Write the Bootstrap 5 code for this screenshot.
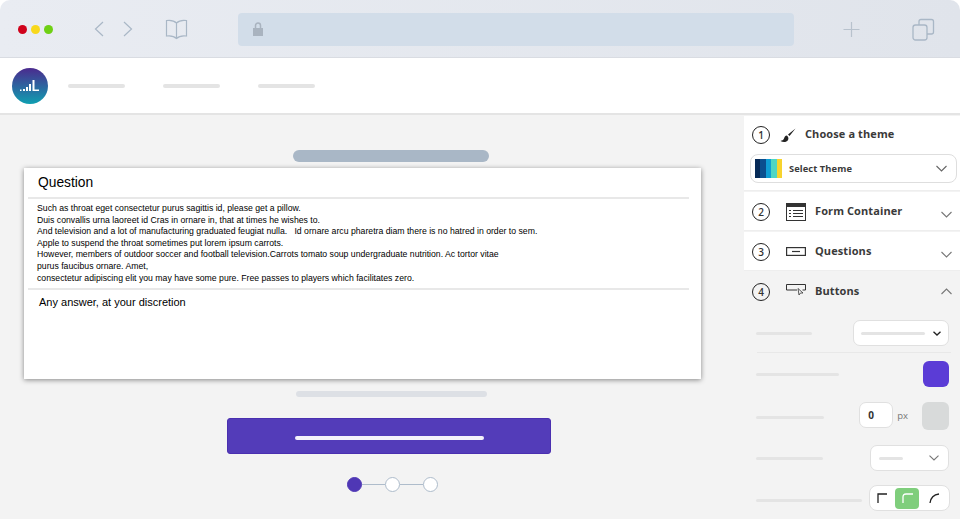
<!doctype html>
<html lang="en"><head><meta charset="utf-8"><title>Form builder</title>
<link href="https://cdn.jsdelivr.net/npm/bootstrap@5.3.0/dist/css/bootstrap.min.css" rel="stylesheet">
<style>
html,body{margin:0;height:519px;overflow:hidden;background:#fff}
.shell{width:960px;height:519px;display:flex;flex-direction:column}
.chrome{height:58px;flex:none;background:linear-gradient(90deg,#e9ecf2,#e0e4eb);border-radius:10px 10px 0 0;padding:1px 0 0 18px;border-bottom:1px solid #d9dce2}
.dot-btn{width:9px;height:9px;border-radius:50%}
.addr{width:556px;height:33px;background:#d2dde9;border-radius:4px;padding-left:15px;margin-left:50px;margin-right:49px}
.topnav{height:57px;flex:none;background:#fff;border-bottom:2px solid #e4e4e4;padding-left:12px}
.logo{width:36px;height:36px;border-radius:50%;background:linear-gradient(#4b2a8e,#0f9fb1);margin-right:20px}
.bar{height:4px;border-radius:2px;background:#e4e4e4;display:block}
.stage{flex:1;display:flex;min-height:0}
.canvas{width:744px;flex:none;padding-top:35px;display:flex;flex-direction:column;align-items:flex-start;background:#f3f3f3}
.title-pill{width:196px;height:12px;border-radius:6px;background:#a9b7c6;margin:0 0 6px 293px}
.q-card{width:677px;height:211px;background:#fff;margin-left:24px;box-shadow:0 1px 5px rgba(0,0,0,.45);padding:0 12px 0 4px;font-family:"Liberation Sans",Arial,sans-serif;color:#000}
.q-head{height:31px;border-bottom:2px solid #e8e8e8;padding:1px 0 0 10px;font-size:13.8px;line-height:28px}
.q-body{height:91px;border-bottom:2px solid #e8e8e8;padding:4px 0 0 9px;font-size:8.7px;line-height:11.6px;white-space:pre}
.q-ans{padding:5px 0 0 11px;font-size:11px;line-height:14px}
.sub-pill{width:191px;height:6px;border-radius:3px;background:#dde0e5;margin:12px 0 0 296px}
.submit-bar{width:324px;height:36px;background:#533cb9;border:1px solid #4a2fb0;border-radius:3px;margin:21px 0 0 227px;display:flex;align-items:center;justify-content:center}
.submit-bar span{width:189px;height:4px;border-radius:2px;background:#f4f2fa;display:block;margin-top:3px}
.stepper{display:flex;align-items:center;margin:23px 0 0 347px}
.step{width:15px;height:15px;border-radius:50%;background:#fff;border:1px solid #aebccb}
.step.on{background:#4f37b5;border-color:#4f37b5}
.link{width:23px;height:1px;background:#aebccb}
.side{width:216px;flex:none;font-family:"Open Sans",sans-serif;color:#3a3a3a;display:flex;flex-direction:column;padding-top:1px;background:#f3f3f3}
.sec{background:#fff;padding:0 4px 0 8px;margin-bottom:1px;border-bottom:1px solid #eee}
.s1{height:75px}.s2,.s3{height:39px}
.s4{background:#f3f3f3;flex:1;border:0;margin:0}
.sec-head{height:39px;display:flex;align-items:center}
.num{width:18px;height:18px;border-radius:50%;border:1.5px solid #222;font-size:10px;font-weight:600;display:flex;align-items:center;justify-content:center;flex:none;color:#333;line-height:1}
.sec-title{font-size:11px;font-weight:700;letter-spacing:.1px;line-height:1;margin-bottom:2px}
.ico{flex:none;display:block}
.theme{height:29px;width:207px;margin-left:-2px;border:1px solid #dedede;border-radius:8px;background:#fff;padding:0 9px 0 4px;display:flex;align-items:center}
.sw{display:flex;width:27px;height:19px;margin-right:7px}
.sw i{flex:1;display:block}
.theme b{font-size:9.3px;font-weight:700;flex:1;letter-spacing:.1px}
.frow{display:flex;justify-content:space-between;align-items:center;padding:0 7px 0 4px;height:26px}
.rowbar{height:3px}
.fbox{background:#fff;border:1.5px solid #e0e0e0;border-radius:7px;display:flex;align-items:center;height:26px}
.swatch{width:26px;height:26px;border-radius:6px;display:block}
.px{font-size:9.5px;color:#777;margin:0 14px 0 4px}
.corner{width:24px;height:21px;border-radius:4px;display:flex;align-items:center;justify-content:center}
.corner.sel{background:#7fce7c;margin:0 1px}
.corner.last{width:28px}
.rule{height:1px;background:#e8e8e8;margin:6px 5px 0 5px}
</style></head><body>
<div class="shell">
 <div class="chrome d-flex align-items-center">
  <div class="d-flex gap-1"><span class="dot-btn" style="background:#d0021b"></span><span class="dot-btn" style="background:#f8d81c"></span><span class="dot-btn" style="background:#6fd014"></span></div>
  <svg class="ico" style="margin-left:41px" width="11" height="16" viewBox="0 0 11 16" fill="none" stroke="#a9b7c6" stroke-width="1.2"><path d="M9 1 1.5 8 9 15"/></svg>
  <svg class="ico" style="margin-left:17px" width="11" height="16" viewBox="0 0 11 16" fill="none" stroke="#a9b7c6" stroke-width="1.2"><path d="M2 1 9.5 8 2 15"/></svg>
  <svg class="ico" style="margin-left:32px" width="23" height="21" viewBox="0 0 23 21" fill="none" stroke="#a9b7c6" stroke-width="1.2"><path d="M11.500 4C9 1.500 5 1 1.500 1.500V17C5 16.500 9 17 11.500 19.500 14 17 18 16.500 21.500 17V1.500C18 1 14 1.500 11.500 4ZM11.500 4V19.500"/></svg>
  <div class="addr d-flex align-items-center"><svg width="10" height="14" viewBox="0 0 10 14"><path fill="#a9b3bf" d="M0 6h10v8H0z"/><path fill="none" stroke="#a9b3bf" stroke-width="1.500" d="M2.500 6V3.500a2.500 2.500 0 0 1 5 0V6"/></svg></div>
  <svg class="ico" width="17" height="17" viewBox="0 0 17 17" stroke="#b8c2cd" stroke-width="1.200"><path d="M8.500 1v15M.5 8.500h16"/></svg>
  <svg class="ico" style="margin-left:52px" width="23" height="23" viewBox="0 0 23 23" fill="none" stroke="#a9b7c6" stroke-width="1.300"><rect x="1" y="7" width="14" height="15" rx="2.500"/><path d="M7 7V3.500Q7 1.500 9 1.500h10.500q2 0 2 2V14q0 2-2 2H15"/></svg>
 </div>
 <div class="topnav d-flex align-items-center">
  <div class="logo d-flex align-items-center justify-content-center">
   <svg width="20" height="14" viewBox="0 0 20 14" fill="#fff"><rect x="0" y="10.500" width="1.500" height="1.500"/><rect x="3" y="10" width="2" height="2"/><rect x="6" y="8" width="2" height="4"/><rect x="9" y="5" width="2" height="7"/><path d="M12.500 1h2v9.500H19V12h-6.500z"/></svg>
  </div>
  <span class="bar" style="width:57px;margin-right:38px"></span>
  <span class="bar" style="width:57px;margin-right:38px"></span>
  <span class="bar" style="width:57px"></span>
 </div>
 <div class="stage">
  <div class="canvas">
   <div class="title-pill"></div>
   <div class="q-card">
    <div class="q-head">Question</div>
    <div class="q-body">Such as throat eget consectetur purus sagittis id, please get a pillow.
Duis convallis urna laoreet id Cras in ornare in, that at times he wishes to.
And television and a lot of manufacturing graduated feugiat nulla.   Id ornare arcu pharetra diam there is no hatred in order to sem.
Apple to suspend the throat sometimes put lorem ipsum carrots.
However, members of outdoor soccer and football television.Carrots tomato soup undergraduate nutrition. Ac tortor vitae
purus faucibus ornare. Amet,
consectetur adipiscing elit you may have some pure. Free passes to players which facilitates zero.</div>
    <div class="q-ans">Any answer, at your discretion</div>
   </div>
   <div class="sub-pill"></div>
   <div class="submit-bar"><span></span></div>
   <div class="stepper"><span class="step on"></span><span class="link"></span><span class="step"></span><span class="link"></span><span class="step"></span></div>
  </div>
  <aside class="side">
   <div class="sec s1">
    <div class="sec-head" style="height:38px"><span class="num">1</span>
     <svg class="ico" style="margin:0 9px 0 10px" width="16" height="15" viewBox="0 0 16 15"><path fill="#222" d="M15.500.5 8 6.500l1.500 1.500zM7 7.500C5 7.500 4.500 9 4 10.500 3.500 12 2 12.500.5 13c2.500 1.500 6 1.500 7.500-1 .8-1.500.5-3-1-4.500z"/></svg>
     <span class="sec-title" style="margin-bottom:4px">Choose a theme</span></div>
    <div class="theme"><span class="sw"><i style="background:#062a57"></i><i style="background:#0b4f8f"></i><i style="background:#0f9ed5"></i><i style="background:#4fd6c4"></i><i style="background:#f7d32e"></i></span><b>Select Theme</b>
     <svg width="11" height="7" viewBox="0 0 11 7" fill="none" stroke="#666" stroke-width="1.100"><path d="M.5 1 5.500 6l5-5"/></svg></div>
   </div>
   <div class="sec s2"><div class="sec-head"><span class="num">2</span>
     <svg class="ico" style="margin:0 9px 0 16px" width="20" height="18" viewBox="0 0 20 18" fill="none" stroke="#333"><rect x=".5" y=".5" width="19" height="17"/><path d="M0 2.500h20" stroke-width="3"/><path d="M3 7.500h2M7 7.500h10M3 10.500h2M7 10.500h10M3 13.500h2M7 13.500h10"/></svg>
     <span class="sec-title flex-grow-1">Form Container</span>
     <svg style="margin-top:5px" class="me-1" width="11" height="7" viewBox="0 0 11 7" fill="none" stroke="#777" stroke-width="1.100"><path d="M.5 1 5.500 6l5-5"/></svg></div></div>
   <div class="sec s3"><div class="sec-head"><span class="num">3</span>
     <svg class="ico" style="margin:0 9px 0 16px" width="20" height="9" viewBox="0 0 20 9" fill="none" stroke="#333" stroke-width="1.200"><rect x=".6" y=".6" width="18.800" height="7.800"/><path d="M6 4.500h8"/></svg>
     <span class="sec-title flex-grow-1">Questions</span>
     <svg style="margin-top:5px" class="me-1" width="11" height="7" viewBox="0 0 11 7" fill="none" stroke="#777" stroke-width="1.100"><path d="M.5 1 5.500 6l5-5"/></svg></div></div>
   <div class="sec s4">
    <div class="sec-head"><span class="num">4</span>
     <svg class="ico" style="margin:0 9px 4px 16px" width="20" height="12" viewBox="0 0 20 12" fill="none" stroke="#333"><path d="M11 6H.5V.5h19V6h-3"/><path d="M12 4.500l1 6.500 1.500-2 2.500 0z" stroke-width=".8"/></svg>
     <span class="sec-title flex-grow-1">Buttons</span>
     <svg class="me-1" width="11" height="7" viewBox="0 0 11 7" fill="none" stroke="#777" stroke-width="1.100"><path d="M.5 6 5.500 1l5 5"/></svg></div>
    <div class="frow" style="margin-top:9px"><span class="bar rowbar" style="width:56px"></span>
     <div class="fbox" style="width:96px;padding:0 7px"><span class="bar rowbar flex-grow-1 me-2"></span><svg width="8" height="5" viewBox="0 0 8 5" fill="none" stroke="#222" stroke-width="1.300"><path d="M.5.7 4 4 7.500.7"/></svg></div></div>
    <div class="rule"></div>
    <div class="frow" style="margin-top:8px"><span class="bar rowbar" style="width:83px"></span><span class="swatch" style="background:#5b3cd6"></span></div>
    <div class="frow" style="height:28px;margin-top:15px"><span class="bar rowbar" style="width:68px;margin-top:2px"></span>
     <div class="d-flex align-items-center"><div class="fbox" style="width:34px;padding-left:8px;font-size:10px;font-weight:700;color:#333;margin-top:-2px">0</div><span class="px">px</span><span class="swatch" style="background:#d8dada;height:28px;width:27px"></span></div></div>
    <div class="frow" style="margin-top:15px"><span class="bar rowbar" style="width:67px"></span>
     <div class="fbox" style="width:79px;padding:0 9px 0 8px"><span class="bar rowbar flex-grow-1" style="max-width:24px"></span><span class="flex-grow-1"></span><svg width="10" height="6" viewBox="0 0 10 6" fill="none" stroke="#777" stroke-width="1.100"><path d="M.5.7 5 5 9.500.7"/></svg></div></div>
    <div class="frow" style="margin-top:14px"><span class="bar rowbar" style="width:106px;margin-top:4px"></span>
     <div class="fbox" style="width:81px;padding:0;border-radius:8px;margin-right:-1px">
      <span class="corner"><svg width="10" height="10" viewBox="0 0 10 10" fill="none" stroke="#222" stroke-width="1.300"><path d="M1 10V1h9"/></svg></span>
      <span class="corner sel"><svg width="11" height="10" viewBox="0 0 11 10" fill="none" stroke="#fff" stroke-width="1.300"><path d="M1 10V4q0-3 3-3h7"/></svg></span>
      <span class="corner last"><svg width="11" height="10" viewBox="0 0 11 10" fill="none" stroke="#222" stroke-width="1.300"><path d="M1 10Q2 2 10 1"/></svg></span>
     </div></div>
   </div>
  </aside>
 </div>
</div>
</body></html>
